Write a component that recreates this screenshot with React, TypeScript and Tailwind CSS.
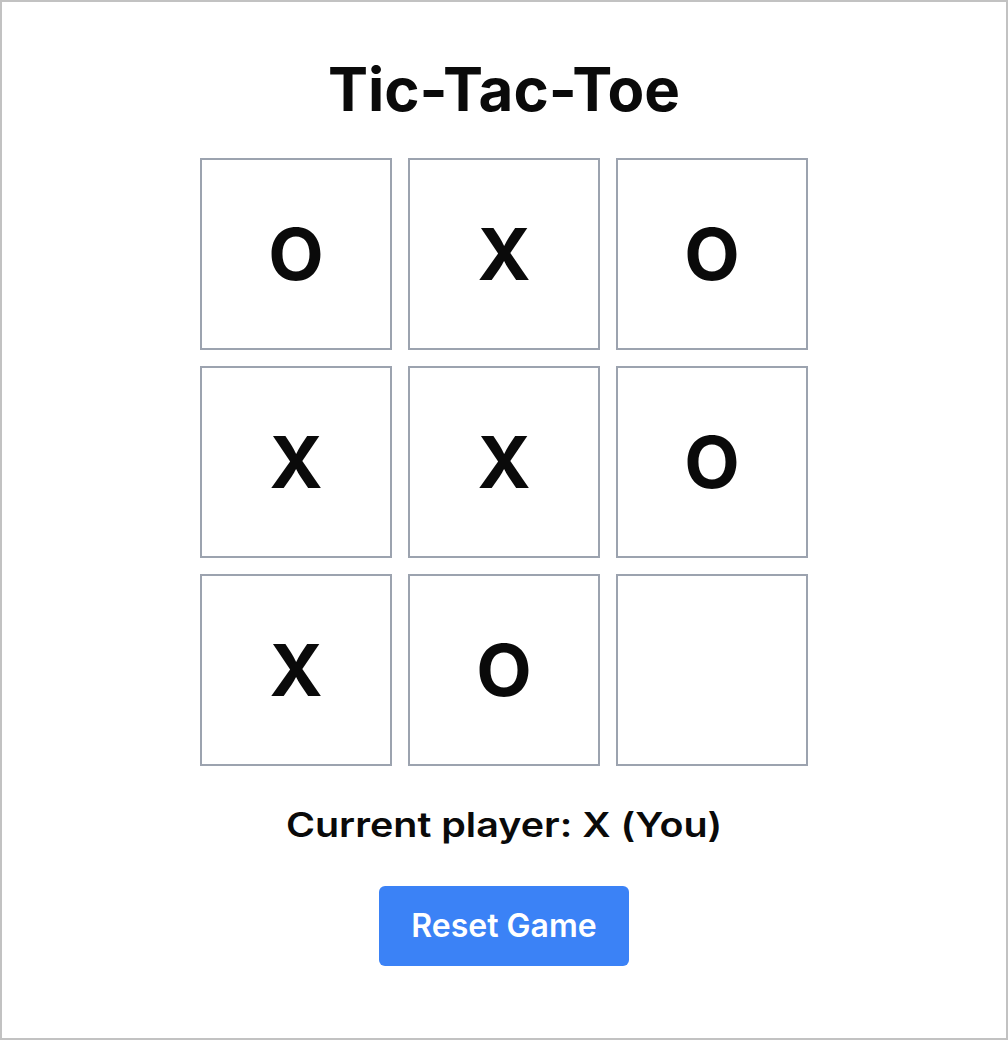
import React from "react";

const board = ["O", "X", "O", "X", "X", "O", "X", "O", ""];

export default function App() {
  return (
    <div
      className="h-[1040px] w-[1008px] border-2 border-[#c2c2c2] bg-white flex flex-col items-center text-[#0a0a0a]"
      style={{ fontFamily: "Inter, 'Noto Sans', sans-serif" }}
    >
      <h1 className="mt-[57px] text-[60px] font-bold leading-[60px]">Tic-Tac-Toe</h1>
      <div className="mt-[39px] grid grid-cols-[repeat(3,192px)] gap-4">
        {board.map((v, i) => (
          <div
            key={i}
            className="h-[192px] w-[192px] border-2 border-[#9ca3af] flex items-center justify-center text-[72px] font-bold"
          >
            {v}
          </div>
        ))}
      </div>
      <p className="mt-[35px] inline-block text-[34px] font-semibold leading-[48px] scale-x-[1.16]">Current player: X (You)</p>
      <button className="mt-[37px] h-[80px] w-[250px] rounded-md bg-[#3b82f6] text-white text-[32px] font-semibold">
        Reset Game
      </button>
    </div>
  );
}
